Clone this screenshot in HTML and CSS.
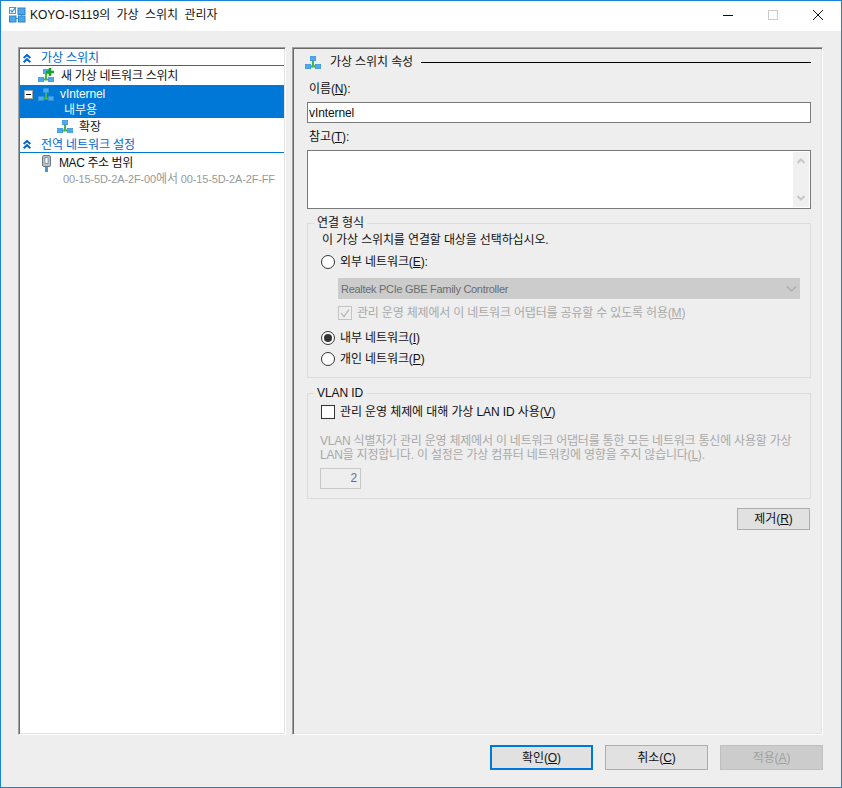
FILE: index.html
```html
<!DOCTYPE html>
<html lang="ko">
<head>
<meta charset="utf-8">
<title>KOYO-IS119의 가상 스위치 관리자</title>
<link rel="stylesheet" href="styles.css">
</head>
<body>
<svg class="defs" width="0" height="0" aria-hidden="true">
  <symbol id="net" viewBox="0 0 16 13">
    <path d="M8 4v6M3 10.5h10" stroke="#3fb54a" stroke-width="2" fill="none"/>
    <rect x=".3" y="8.3" width="5.4" height="4.4" fill="#4cabf0" stroke="#2f8fd8" stroke-width=".6"/>
    <rect x="5.3" y=".3" width="5.4" height="4.4" fill="#4cabf0" stroke="#2f8fd8" stroke-width=".6"/>
    <rect x="10.3" y="8.3" width="5.4" height="4.4" fill="#4cabf0" stroke="#2f8fd8" stroke-width=".6"/>
  </symbol>
  <symbol id="chev" viewBox="0 0 8 9">
    <path d="M.6 4 4 1l3.4 3M.6 8.2 4 5.2l3.4 3" stroke="#0066cc" stroke-width="2" fill="none"/>
  </symbol>
</svg>
<div class="window">
  <header class="titlebar">
    <svg class="app-icon" width="17" height="16" viewBox="0 0 17 16">
      <rect x=".5" y=".5" width="6" height="6" fill="#fff" stroke="#8a8a8a"/>
      <path d="M1.5 3 3 5l4-5" stroke="#3d95db" stroke-width="1.3" fill="none"/>
      <path d="M7 11.5h3M12.5 7v2" stroke="#3d8fd0"/>
      <rect x="9" y="1" width="7" height="6.5" fill="#4ca6ea" stroke="#2f84c9"/>
      <rect x=".5" y="9" width="6.5" height="6" fill="#4ca6ea" stroke="#2f84c9"/>
      <rect x="9.5" y="9" width="6.5" height="6" fill="#4ca6ea" stroke="#2f84c9"/>
    </svg>
    <span class="title-text">KOYO-IS119의 가상 스위치 관리자</span>
    <div class="win-controls">
      <svg width="10" height="10" viewBox="0 0 10 10"><path d="M0 5.5h10" stroke="#111"/></svg>
      <svg width="10" height="10" viewBox="0 0 10 10"><rect x=".5" y=".5" width="9" height="9" fill="none" stroke="#ccc"/></svg>
      <svg width="10" height="10" viewBox="0 0 10 10"><path d="M0 0l10 10M10 0 0 10" stroke="#111"/></svg>
    </div>
  </header>

  <main class="main">
    <nav class="pane tree">
      <div class="section first">
        <svg class="chev" width="8" height="9"><use href="#chev"/></svg>
        <span>가상 스위치</span>
      </div>
      <div class="row row-new">
        <span class="icon-wrap">
          <svg class="net" width="16" height="13"><use href="#net"/></svg>
          <svg class="plus" width="8" height="8" viewBox="0 0 8 8"><path d="M4 0v8M0 4h8" stroke="#18a32a" stroke-width="2.6"/></svg>
        </span>
        <span class="row-label">새 가상 네트워크 스위치</span>
      </div>
      <div class="selected">
        <div class="sel-line">
          <span class="collapse"><i></i></span>
          <svg class="net" width="16" height="13"><use href="#net"/></svg>
          <span class="sel-name">vInternel</span>
        </div>
        <div class="sel-sub">내부용</div>
      </div>
      <div class="row row-ext">
        <svg class="net" width="16" height="13"><use href="#net"/></svg>
        <span class="row-label">확장</span>
      </div>
      <div class="section">
        <svg class="chev" width="8" height="9"><use href="#chev"/></svg>
        <span>전역 네트워크 설정</span>
      </div>
      <div class="row row-mac">
        <svg class="mac-icon" width="9" height="17" viewBox="0 0 9 17">
          <rect x=".5" y=".5" width="8" height="11" rx="1.5" fill="#b9c3cc" stroke="#6c7780"/>
          <rect x="3" y="2.5" width="3" height="6" fill="#fff" stroke="#6c7780" stroke-width=".7"/>
          <rect x="3" y="12" width="3" height="5" fill="#3e9ae0"/>
        </svg>
        <span class="row-label">MAC 주소 범위</span>
      </div>
      <div class="mac-range">00-15-5D-2A-2F-00<span class="mac-word">에서</span> 00-15-5D-2A-2F-FF</div>
    </nav>

    <section class="pane props">
      <div class="props-head">
        <svg width="16" height="13"><use href="#net"/></svg>
        <span class="props-title">가상 스위치 속성</span>
        <span class="props-line"></span>
      </div>
      <div class="label label-name">이름(<u>N</u>):</div>
      <div class="input">vInternel</div>
      <div class="label label-notes">참고(<u>T</u>):</div>
      <div class="textarea">
        <div class="scrollbar">
          <svg width="8" height="6" viewBox="0 0 8 6"><path d="M.5 5 4 1.5 7.5 5" stroke="#c8c8c8" stroke-width="2" fill="none"/></svg>
          <svg width="8" height="6" viewBox="0 0 8 6"><path d="M.5 1 4 4.5 7.5 1" stroke="#c8c8c8" stroke-width="2" fill="none"/></svg>
        </div>
      </div>

      <div class="group group-conn">
        <span class="legend">연결 형식</span>
        <div class="conn-intro">이 가상 스위치를 연결할 대상을 선택하십시오.</div>
        <div class="opt opt-ext"><span class="radio"></span><span>외부 네트워크(<u>E</u>):</span></div>
        <div class="select">
          <span class="select-text">Realtek PCIe GBE Family Controller</span>
          <svg width="11" height="7" viewBox="0 0 11 7"><path d="M1 1.5 5.5 6 10 1.5" stroke="#aaa" stroke-width="1.2" fill="none"/></svg>
        </div>
        <div class="opt opt-share disabled">
          <span class="check check-off">
            <svg width="12" height="12" viewBox="0 0 12 12"><path d="M2 6l3 3.5L10 2.5" stroke="#bdbdbd" stroke-width="1.4" fill="none"/></svg>
          </span>
          <span>관리 운영 체제에서 이 네트워크 어댑터를 공유할 수 있도록 허용(<u>M</u>)</span>
        </div>
        <div class="opt opt-int"><span class="radio on"><i></i></span><span>내부 네트워크(<u>I</u>)</span></div>
        <div class="opt opt-priv"><span class="radio"></span><span>개인 네트워크(<u>P</u>)</span></div>
      </div>

      <div class="group group-vlan">
        <span class="legend">VLAN ID</span>
        <div class="opt"><span class="check"></span><span>관리 운영 체제에 대해 가상 LAN ID 사용(<u>V</u>)</span></div>
        <p class="vlan-desc">VLAN 식별자가 관리 운영 체제에서 이 네트워크 어댑터를 통한 모든 네트워크 통신에 사용할 가상<br>LAN을 지정합니다. 이 설정은 가상 컴퓨터 네트워킹에 영향을 주지 않습니다(<u>L</u>).</p>
        <div class="spin">2</div>
      </div>

      <div class="remove-row"><button class="btn btn-remove" type="button">제거(<u>R</u>)</button></div>
    </section>
  </main>

  <footer class="footer">
    <button class="btn btn-main btn-default" type="button">확인(<u>O</u>)</button>
    <button class="btn btn-main" type="button">취소(<u>C</u>)</button>
    <button class="btn btn-main btn-disabled" type="button">적용(<u>A</u>)</button>
  </footer>
</div>
</body>
</html>
```
FILE: styles.css
```css
* { box-sizing: border-box; }
html, body { margin: 0; padding: 0; }
body {
  width: 842px;
  height: 788px;
  overflow: hidden;
  font: 12px/16px "Liberation Sans", "Noto Sans CJK KR", sans-serif;
  letter-spacing: -0.1px;
  color: #111;
  background: #eee;
}
.defs { display: block; height: 0; }
u { text-underline-offset: 1px; }

.window {
  width: 842px;
  height: 788px;
  border: 1px solid #1883d7;
  background: #eee;
  display: flex;
  flex-direction: column;
}

.titlebar {
  height: 30px;
  flex: none;
  background: #fff;
  display: flex;
  align-items: center;
  padding: 0 18px 2px 8px;
}
.app-icon { flex: none; margin-right: 4px; }
.title-text { letter-spacing: 0; word-spacing: 3px; }
.win-controls { margin-left: auto; display: flex; gap: 35px; }

.main {
  display: flex;
  gap: 6px;
  padding: 16px 18px 0 17px;
  flex: none;
}
.pane {
  height: 688px;
  border: 1px solid #fff;
  border-top-color: #a0a0a0;
  border-left-color: #a0a0a0;
  box-shadow: inset 1px 1px 0 #696969, inset -1px -1px 0 #e3e3e3;
  padding: 1px;
}

/* left tree */
.tree { width: 268px; background: #fff; }
.section {
  height: 18px;
  display: flex;
  align-items: center;
  padding: 2px 0 0 3px;
  color: #0066cc;
  border-bottom: 1px solid #0078d7;
}
.section.first { height: 17px; }
.chev { flex: none; margin-right: 10px; }
.row { display: flex; align-items: center; }
.row-new { height: 19px; padding-left: 18px; }
.icon-wrap { position: relative; display: flex; width: 16px; height: 13px; }
.plus { position: absolute; right: 0; top: -1px; }
.row-new .row-label { margin-left: 7px; letter-spacing: -0.25px; }
.selected { height: 33px; background: #0078d7; color: #fff; padding-top: 1px; }
.sel-line { height: 16px; display: flex; align-items: center; padding-left: 4px; }
.collapse {
  width: 9px;
  height: 9px;
  background: #fff;
  border: 1px solid #a5a5a5;
  display: flex;
  align-items: center;
  justify-content: center;
  margin-right: 5px;
}
.collapse i { display: block; width: 5px; height: 1px; background: #111; }
.sel-name { margin-left: 6px; }
.sel-sub { padding-left: 44px; color: #f2f6fb; }
.row-ext { height: 17px; padding-left: 37px; }
.row-ext .row-label { margin-left: 6px; }
.row-mac { height: 18px; padding: 2px 0 0 22px; }
.row-mac .row-label { margin-left: 8px; letter-spacing: -0.4px; }
.mac-icon { flex: none; }
.mac-range { padding-left: 43px; color: #999; height: 16px; font-size: 11px; letter-spacing: -0.14px; white-space: nowrap; }
.mac-word { font-size: 12px; }

/* right pane */
.props { width: 531px; padding: 7px 11px 0 14px; }
.props-head { display: flex; align-items: center; height: 14px; margin-left: -2px; }
.props-title { margin-left: 9px; }
.props-line { flex: 1; height: 1px; background: #000; margin-left: 8px; }
.label { padding-left: 2px; }
.label-name { margin-top: 12px; }
.label-notes { margin-top: 6px; }
.input {
  margin-top: 5px;
  height: 21px;
  background: #fff;
  border: 1px solid #7a7a7a;
  padding: 1px 1px;
  line-height: 18px;
}
.textarea {
  margin-top: 5px;
  height: 59px;
  background: #fff;
  border: 1px solid #7a7a7a;
  display: flex;
  justify-content: flex-end;
  padding: 1px;
}
.scrollbar {
  width: 16px;
  background: #f0f0f0;
  display: flex;
  flex-direction: column;
  justify-content: space-between;
  align-items: center;
  padding: 6px 0;
}

.group { position: relative; border: 1px solid #dcdcdc; }
.legend { position: absolute; left: 6px; top: -9px; padding: 0 3px; background: #eee; }
.group-conn { margin-top: 14px; height: 155px; padding: 8px 10px 0 13px; }
.conn-intro { padding-left: 1px; letter-spacing: -0.13px; }
.opt { display: flex; align-items: center; height: 16px; }
.opt-ext { margin-top: 6px; }
.opt-share { margin-top: 6px; margin-left: 17px; letter-spacing: -0.18px; }
.opt-int { margin-top: 9px; }
.opt-priv { margin-top: 5px; }
.disabled { color: #a9a9a9; }
.radio {
  flex: none;
  width: 14px;
  height: 14px;
  border: 1px solid #333;
  border-radius: 50%;
  background: #fff;
  margin-right: 5px;
  display: flex;
  align-items: center;
  justify-content: center;
}
.radio i { display: block; width: 8px; height: 8px; border-radius: 50%; background: #333; }
.check {
  flex: none;
  width: 14px;
  height: 14px;
  border: 1px solid #333;
  background: #fff;
  margin-right: 5px;
  display: flex;
}
.check-off { border-color: #c4c4c4; background: #eee; }
.select {
  margin: 8px 0 0 17px;
  height: 21px;
  background: #ccc;
  color: #6d6d6d;
  display: flex;
  align-items: center;
  justify-content: space-between;
  padding: 0 3px;
}
.select-text { font-size: 11px; letter-spacing: -0.3px; }

.group-vlan { margin-top: 15px; height: 106px; padding: 10px 10px 0 13px; }
.vlan-desc { margin: 14px 0 0 -1px; color: #a9a9a9; line-height: 14px; white-space: nowrap; letter-spacing: -0.22px; }
.spin {
  margin: 6px 0 0 -1px;
  width: 41px;
  height: 21px;
  border: 1px solid #c8c8c8;
  color: #6d6d6d;
  text-align: right;
  padding-right: 3px;
  line-height: 19px;
}

.remove-row { display: flex; justify-content: flex-end; margin: 9px 1px 0 0; }
.btn {
  font: inherit;
  letter-spacing: inherit;
  color: #111;
  background: #e1e1e1;
  border: 1px solid #adadad;
  padding: 0;
}
.btn-remove { width: 73px; height: 22px; }

.footer {
  display: flex;
  justify-content: flex-end;
  gap: 12px;
  padding: 10px 18px 0 0;
}
.btn-main { width: 103px; height: 25px; }
.btn-default { border: 2px solid #0078d7; }
.btn-disabled { background: #ccc; border-color: #bfbfbf; color: #a0a0a0; }
```
